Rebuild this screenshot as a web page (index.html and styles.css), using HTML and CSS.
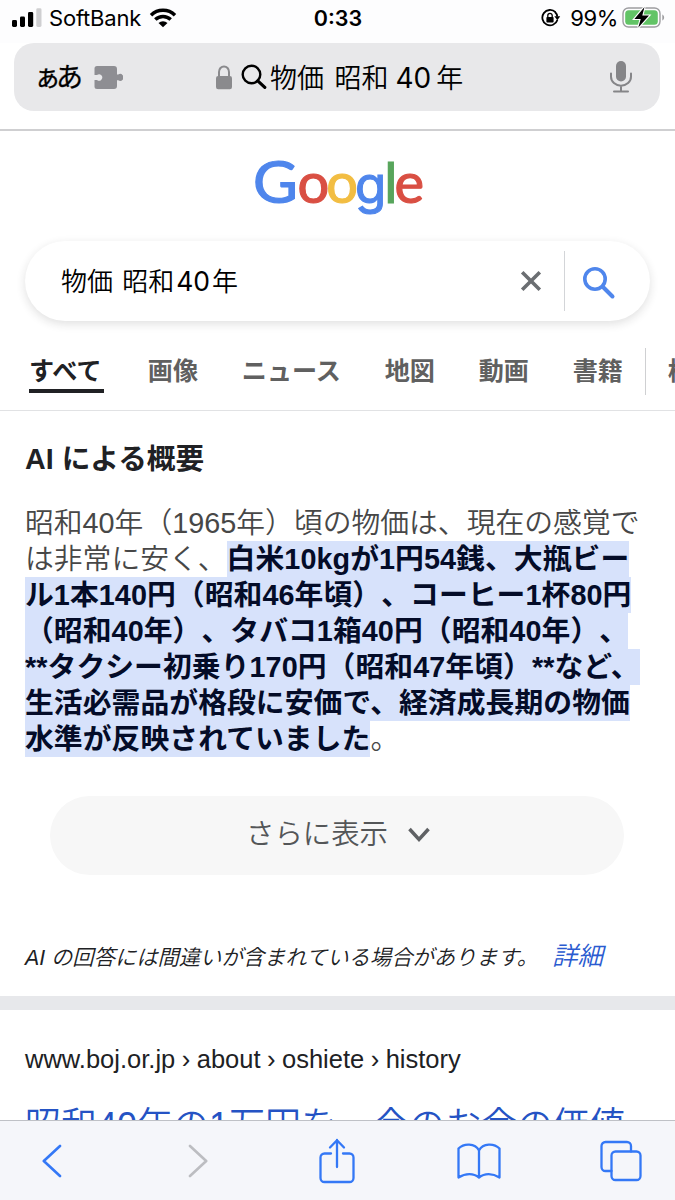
FILE: index.html
```html
<!DOCTYPE html>
<html lang="ja">
	<head>
		<meta charset="UTF-8">
		<title>物価 昭和40年 - Google 検索</title>
		<link rel="stylesheet" href="styles.css">
	</head>
	<body>
		<div class="status">
			<div class="status-left">
				<svg width="30" height="20" viewBox="0 0 30 20">
					<rect x="0" y="12" width="5" height="7" rx="1.4"/>
					<rect x="8" y="8.5" width="5" height="10.5" rx="1.4"/>
					<rect x="16" y="4" width="5.2" height="15" rx="1.4"/>
					<rect x="24.3" y="0.3" width="5.2" height="18.7" rx="1.4" fill="#cfcfd1"/>
				</svg>
				<span class="carrier">SoftBank</span>
				<svg class="wifi" width="28" height="20" viewBox="0 0 28 20">
					<path d="M2 7.2a17.3 17.3 0 0 1 24 0M6.3 11.5a11.2 11.2 0 0 1 15.4 0" fill="none" stroke="#000" stroke-width="3.5"/>
					<path d="M14 19.3l-4.5-4.3a6.6 6.6 0 0 1 9 0z"/>
				</svg>
			</div>
			<div class="clock">0:33</div>
			<div class="status-right">
				<svg width="20" height="18" viewBox="0 0 20 18">
					<path d="M14.5 3.2A7.7 7.7 0 1 0 16.4 11" fill="none" stroke="#000" stroke-width="1.8"/>
					<path d="M14 3a7.7 7.7 0 0 1 2.3 4.6" fill="none" stroke="#000" stroke-width="1.8"/>
					<path d="M13.4 7.2h5.8l-2.8 4z"/>
					<rect x="5.4" y="8" width="7.2" height="5.6" rx="0.8"/>
					<path d="M6.8 8.2V6.5a2.2 2.2 0 0 1 4.4 0v1.7" fill="none" stroke="#000" stroke-width="1.3"/>
				</svg>
				<span class="percent">99%</span>
				<svg class="battery" width="44" height="24" viewBox="0 0 44 24">
					<rect x="1" y="2" width="37" height="19" rx="5.5" fill="none" stroke="#9d9da0" stroke-width="1.4"/>
					<rect x="3.2" y="4.2" width="32.6" height="14.6" rx="3.5" fill="#62c466"/>
					<path d="M40.3 8.5c2.4.8 2.4 5.2 0 6z" fill="#9d9da0"/>
					<path d="M22.5 1L12.4 13h6.3l-2.4 8.6L27 9.6h-6.7z" stroke="#fff" stroke-width="2.2" paint-order="stroke"/>
				</svg>
			</div>
		</div>
		<div class="address">
			<span class="reader">ぁあ</span>
			<svg class="puzzle" width="29" height="25" viewBox="0 0 29 25" fill="#8e8e93">
				<path d="M3 1h17a3 3 0 0 1 3 3v5.6h1.2a3.4 3.4 0 1 1 0 5.6H23V21a3 3 0 0 1-3 3H3a2.5 2.5 0 0 1-2.5-2.5V15H3a3.2 3.2 0 1 0 0-5H.5V3.5A2.5 2.5 0 0 1 3 1z"/>
			</svg>
			<div class="address-text">
				<svg width="18" height="25" viewBox="0 0 18 25">
					<rect x="1" y="11" width="16" height="13.3" rx="2.2" fill="#8a8a8d"/>
					<path d="M4 11.5V7a5 5.6 0 0 1 10 0v4.5" fill="none" stroke="#8a8a8d" stroke-width="2"/>
				</svg>
				<svg class="lens" width="26" height="26" viewBox="0 0 26 26" fill="none" stroke="#000" stroke-width="2.4">
					<circle cx="10.5" cy="10.5" r="8.8"/>
					<path d="M16.8 16.8l7 6.5" stroke-width="3.2" stroke-linecap="round"/>
				</svg>
				<span class="address-query">物価 昭和<span class="digits">40</span>年</span>
			</div>
			<svg class="mic" width="24" height="34" viewBox="0 0 24 34">
				<rect x="7" y="1" width="10" height="20.5" rx="5" fill="#858588"/>
				<path d="M2 13.5v3.2a10 9 0 0 0 20 0v-3.2M12 26v5M5 31.5h14" fill="none" stroke="#858588" stroke-width="2" stroke-linecap="round"/>
			</svg>
		</div>
		<div class="page">
			<div class="logo"><span class="blue big">G</span><span class="red">o</span><span class="yellow">o</span><span class="blue single">g</span><span class="green">l</span><span class="red">e</span></div>
			<div class="searchbox">
				<span class="query">物価 昭和<span class="digits">40</span>年</span>
				<svg class="clear" width="22" height="22" viewBox="0 0 22 22">
					<path d="M2.2 2.2l17.6 17.6M19.8 2.2L2.2 19.8" stroke="#6b6e72" stroke-width="3.6"/>
				</svg>
				<span class="search-line"></span>
				<svg class="search-icon" width="34" height="34" viewBox="0 0 34 34" fill="none" stroke="#4f86ec">
					<circle cx="13" cy="13" r="10.2" stroke-width="3.6"/>
					<path d="M21.5 21.5l9 9" stroke-width="4" stroke-linecap="round"/>
				</svg>
			</div>
			<div class="tabs">
				<span class="tab active">すべて</span>
				<span class="tab">画像</span>
				<span class="tab">ニュース</span>
				<span class="tab">地図</span>
				<span class="tab">動画</span>
				<span class="tab">書籍</span>
				<span class="tab-line"></span>
				<span class="tab">検</span>
			</div>
			<div class="overview">
				<h2>AI による概要</h2>
				<p class="answer">昭和40年（1965年）頃の物価は、現在の感覚で<br>は非常に安く、<mark>白米10kgが1円54銭、大瓶ビー<br>ル1本140円（昭和46年頃）、コーヒー1杯80円<br>（昭和40年）、タバコ1箱40円（昭和40年）、<br>**タクシー初乗り170円（昭和47年頃）**など、<br>生活必需品が格段に安価で、経済成長期の物価<br>水準が反映されていました</mark>。</p>
				<div class="more">
					<span>さらに表示</span>
					<svg width="24" height="18" viewBox="0 0 24 18">
						<path d="M2.5 3l9.5 10.5L21.5 3" fill="none" stroke="#5f6164" stroke-width="3.5"/>
					</svg>
				</div>
				<p class="notice">AI の回答には間違いが含まれている場合があります。<a class="detail">詳細</a></p>
			</div>
			<div class="band"></div>
			<div class="result">
				<div class="cite">www.boj.or.jp › about › oshiete › history</div>
				<a class="result-title">昭和40年の1万円を、今のお金の価値</a>
			</div>
		</div>
		<div class="toolbar">
			<svg class="back" width="20" height="34" viewBox="0 0 20 34">
				<path d="M18 2L1.8 17L18 32"/>
			</svg>
			<svg class="forward" width="20" height="34" viewBox="0 0 20 34">
				<path d="M2 2l16.2 15L2 32"/>
			</svg>
			<svg class="share" width="36" height="46" viewBox="0 0 36 46">
				<path d="M12 15.5H5.5a4 4 0 0 0-4 4V40a4 4 0 0 0 4 4h25a4 4 0 0 0 4-4V19.5a4 4 0 0 0-4-4H24M18 29V2M11 9.5l7-7.3 7 7.3"/>
			</svg>
			<svg class="book" width="44" height="38" viewBox="0 0 44 38">
				<path d="M22 8.5C18 1 7 1 1.5 6.5v29c7-4.5 15-4.5 20.5 0 5.5-4.5 13.5-4.5 20.5 0v-29C37 1 26 1 22 8.5zM22 8.5v27"/>
			</svg>
			<svg width="42" height="42" viewBox="0 0 42 42">
				<rect x="11.5" y="11.5" width="29" height="28.5" rx="4"/>
				<path d="M11.5 31h-6a4 4 0 0 1-4-4V6a4 4 0 0 1 4-4H27a4 4 0 0 1 4 4v5.5"/>
			</svg>
		</div>
	</body>
</html>
```
FILE: styles.css
```css
*{
	box-sizing:border-box;
}
body{
	margin:0;
	width:675px;
	height:1200px;
	display:flex;
	flex-direction:column;
	overflow:hidden;
	background-color:#fff;
	font-family:"Liberation Sans","Noto Sans CJK JP",sans-serif;
	white-space:nowrap;
	text-spacing-trim:space-all;
}
svg{
	display:block;
	flex-shrink:0;
}
.status{
	height:43px;
	flex-shrink:0;
	display:grid;
	grid-template-columns:1fr auto 1fr;
	padding:0 11px 7px 12px;
	align-items:center;
	background-color:#fdfdfe;
	font-family:Inter,sans-serif;
	font-size:22px;
}
.status-left,.status-right{
	display:flex;
	align-items:center;
}
.status-right{
	justify-content:flex-end;
}
.carrier{
	margin-left:7px;
	letter-spacing:-0.2px;
}
.wifi{
	margin-left:8px;
}
.clock{
	font-weight:600;
	font-size:21.5px;
}
.percent{
	margin-left:9px;
	margin-right:4px;
	letter-spacing:-0.4px;
}
.battery{
	margin-right:-2px;
}
.address{
	height:68px;
	flex-shrink:0;
	margin:0 15px 18px 14px;
	padding:0 27px 0 20px;
	display:flex;
	align-items:center;
	background-color:#e8e8ea;
	border-radius:20px;
}
.reader{
	font-size:27px;
	font-weight:400;
	letter-spacing:-5px;
	line-height:38px;
	padding-top:2px;
	-webkit-text-stroke:0.3px #000;
}
.puzzle{
	margin-left:16px;
}
.address-text{
	display:flex;
	align-items:center;
	margin-left:92px;
}
.lens{
	margin-left:8px;
}
.address-query{
	margin-left:3px;
	padding-bottom:2px;
	font-size:27px;
	font-weight:350;
	word-spacing:3px;
}
.address-query .digits{
	margin:0 5px 0 7px;
	font-size:28px;
}
.digits{
	font-family:Inter,sans-serif;
	font-weight:400;
}
.mic{
	margin-left:auto;
}
.page{
	flex:1;
	min-height:0;
	overflow:hidden;
	border-top:2px solid #cfcfd1;
}
.logo{
	height:110px;
	padding:15px 0 0 253px;
	font-family:Lato,sans-serif;
	font-size:56px;
	line-height:70px;
	letter-spacing:-3px;
	-webkit-text-stroke:1.2px currentColor;
}
.big{
	display:inline-block;
	margin-right:3px;
	font-size:58px;
	letter-spacing:-1px;
	transform:scaleX(1.06);
	transform-origin:left;
}
.single{
	font-family:Inter,sans-serif;
	font-size:51px;
	letter-spacing:-2px;
}
.blue{
	color:#4f86ec;
}
.red{
	color:#d94f43;
}
.yellow{
	color:#f2bd42;
}
.green{
	color:#58a55c;
}
.searchbox{
	width:625px;
	height:80px;
	margin-left:25px;
	padding:0 34px 0 36px;
	display:flex;
	align-items:center;
	border-radius:40px;
	box-shadow:0 3px 10px rgba(32,33,36,0.14);
}
.query{
	padding-bottom:3px;
	font-size:26px;
	font-weight:350;
	word-spacing:2px;
}
.query .digits{
	font-size:26.5px;
	margin:0 2px;
}
.clear{
	margin-left:auto;
}
.search-line{
	width:1px;
	height:60px;
	margin:0 17px 0 22px;
	background-color:#d3d5d8;
}
.search-icon{
	margin-top:4px;
}
.tabs{
	height:90px;
	padding:11px 0 0 29px;
	display:flex;
	align-items:center;
	border-bottom:1px solid #e1e2e4;
	overflow:hidden;
}
.tab{
	flex-shrink:0;
	margin-right:43.8px;
	font-size:25.1px;
	font-weight:700;
	line-height:36px;
	color:#606060;
}
.active{
	width:75px;
	height:44px;
	padding-top:4px;
	border-bottom:4px solid #202124;
	color:#202124;
}
.tab-line{
	flex-shrink:0;
	width:1px;
	height:47px;
	margin:0 22px 0 -22px;
	background-color:#cfd0d2;
}
.overview{
	height:585px;
	padding:29px 0 0 25px;
}
h2{
	margin:0;
	font-size:28.7px;
	line-height:38px;
	color:#202124;
}
.answer{
	margin:27px 0 0;
	font-size:28.8px;
	line-height:36px;
	font-weight:350;
	color:#474747;
}
mark{
	padding:2px 0;
	background-color:#d7e2fb;
	color:#040c28;
	font-weight:700;
	letter-spacing:0.06px;
}
.more{
	width:574px;
	height:79px;
	margin:39px 0 0 25px;
	padding-bottom:8px;
	display:flex;
	align-items:center;
	justify-content:center;
	border-radius:40px;
	background-color:#f7f7f7;
	color:#545658;
	font-size:28.4px;
	font-weight:350;
}
.more svg{
	margin:6px -3px 0 19px;
}
.notice{
	margin:61px 0 0;
	line-height:40px;
	font-size:21.3px;
	font-weight:350;
	font-style:italic;
	color:#202124;
}
.detail{
	margin-left:14px;
	font-size:25.5px;
	color:#2b5bd0;
}
.band{
	height:14px;
	background-color:#e7e8eb;
}
.result{
	padding:34px 0 0 25px;
}
.cite{
	font-size:25.5px;
	line-height:30px;
	word-spacing:-0.6px;
	color:#202124;
}
.result-title{
	display:block;
	margin-top:27px;
	font-size:36px;
	line-height:50px;
	font-weight:350;
	color:#2553c4;
}
.toolbar{
	height:80px;
	flex-shrink:0;
	padding-left:42px;
	display:flex;
	align-items:center;
	border-top:1px solid #bfc1c6;
	background-color:#f5f6fa;
}
.toolbar svg{
	fill:none;
	stroke:#3478f6;
	stroke-width:2.3;
	stroke-linecap:round;
	stroke-linejoin:round;
}
.toolbar .back{
	margin-right:126px;
	stroke-width:2.6;
}
.toolbar .forward{
	margin-right:111px;
	stroke:#bcbdc1;
	stroke-width:2.6;
}
.share{
	margin-right:102px;
}
.book{
	margin-right:99px;
}
```
